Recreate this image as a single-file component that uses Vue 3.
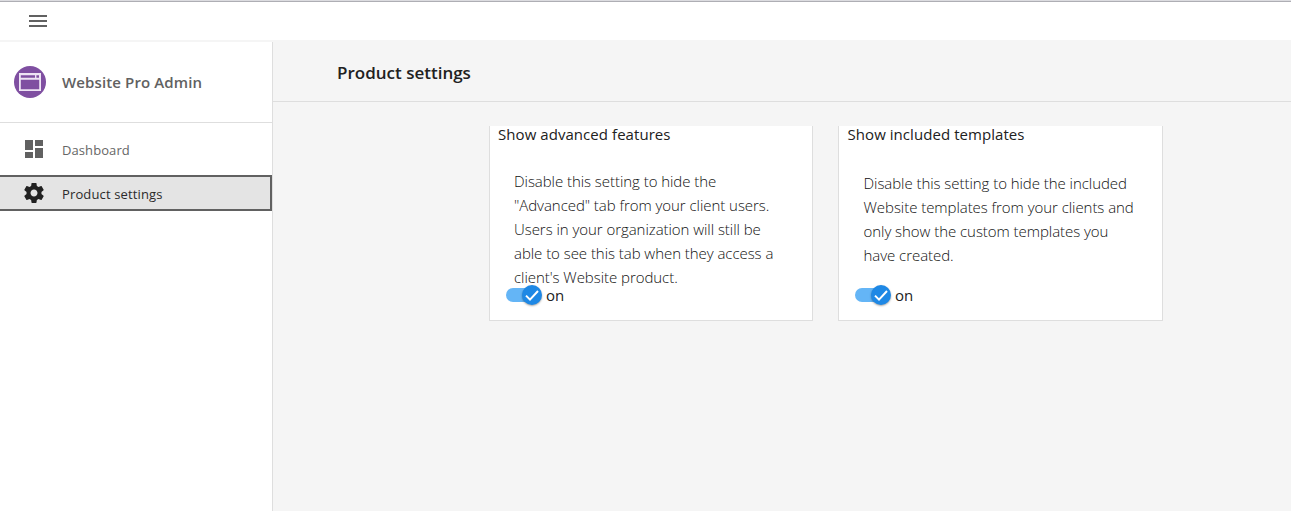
<script setup>
const cards = [
  {
    id: 'advanced',
    title: 'Show advanced features',
    lines: [
      'Disable this setting to hide the',
      '"Advanced" tab from your client users.',
      'Users in your organization will still be',
      'able to see this tab when they access a',
      "client's Website product.",
    ],
  },
  {
    id: 'templates',
    title: 'Show included templates',
    lines: [
      'Disable this setting to hide the included',
      'Website templates from your clients and',
      'only show the custom templates you',
      'have created.',
    ],
  },
]
</script>

<template>
  <div class="app">
    <header class="topbar">
      <svg class="menu" width="24" height="24" viewBox="0 0 24 24">
        <path d="M3 18h18v-2H3v2zm0-5h18v-2H3v2zm0-7v2h18V6H3z" />
      </svg>
    </header>
    <div class="body">
      <nav class="sidebar">
        <div class="brand">
          <svg width="32" height="32" viewBox="0 0 32 32">
            <circle cx="16" cy="16" r="16" fill="#7f4fa1" />
            <path fill="#eee4f4" fill-rule="evenodd" d="M5 7h22v18H5zM6.8 9.2v2.6h14.2V9.2zM22.4 9.2v2.6H25V9.2zM6.8 13.8v9.4h18.4v-9.4z" />
          </svg>
          <span class="brand-name">Website Pro Admin</span>
        </div>
        <a class="item dash">
          <svg width="24" height="24" viewBox="0 0 24 24">
            <path d="M3 13h8V3H3v10zm0 8h8v-6H3v6zm10 0h8V11h-8v10zm0-18v6h8V3h-8z" />
          </svg>
          <span class="item-name">Dashboard</span>
        </a>
        <a class="item active">
          <svg width="24" height="24" viewBox="0 0 24 24">
            <path d="M19.43 12.98c.04-.32.07-.64.07-.98s-.03-.66-.07-.98l2.11-1.65c.19-.15.24-.42.12-.64l-2-3.46c-.12-.22-.39-.3-.61-.22l-2.49 1c-.52-.4-1.08-.73-1.69-.98l-.38-2.65C14.46 2.18 14.25 2 14 2h-4c-.25 0-.46.18-.49.42l-.38 2.65c-.61.25-1.17.59-1.69.98l-2.49-1c-.23-.09-.49 0-.61.22l-2 3.46c-.13.22-.07.49.12.64l2.11 1.65c-.04.32-.07.65-.07.98s.03.66.07.98l-2.11 1.65c-.19.15-.24.42-.12.64l2 3.46c.12.22.39.3.61.22l2.49-1c.52.4 1.08.73 1.69.98l.38 2.65c.03.24.24.42.49.42h4c.25 0 .46-.18.49-.42l.38-2.65c.61-.25 1.17-.59 1.69-.98l2.49 1c.23.09.49 0 .61-.22l2-3.46c.12-.22.07-.49-.12-.64l-2.11-1.65zM12 15.5c-1.93 0-3.5-1.57-3.5-3.5s1.57-3.5 3.5-3.5 3.5 1.57 3.5 3.5-1.57 3.5-3.5 3.5z" />
          </svg>
          <span class="item-name">Product settings</span>
        </a>
      </nav>
      <main class="main">
        <div class="page-head"><h1>Product settings</h1></div>
        <div class="cards">
          <section v-for="card in cards" :key="card.id" class="card" :class="card.id">
            <h2>{{ card.title }}</h2>
            <p>
              <span v-for="line in card.lines" :key="line" class="line">{{ line }}</span>
            </p>
            <div class="toggle">
              <span class="track">
                <span class="thumb">
                  <svg width="16" height="16" viewBox="0 0 16 16">
                    <path d="M2 8.6l4 4L14 4" fill="none" stroke="#fff" stroke-width="2" />
                  </svg>
                </span>
              </span>
              <span class="state">on</span>
            </div>
          </section>
        </div>
      </main>
    </div>
  </div>
</template>

<style>
body {
  margin: 0;
  overflow: hidden;
}
</style>

<style scoped>
.app {
  box-sizing: border-box;
  width: 1291px;
  height: 511px;
  display: flex;
  flex-direction: column;
  background: #f5f5f5;
  font-family: "Open Sans", "Noto Sans", sans-serif;
  color: #212121;
  white-space: nowrap;
  overflow: hidden;
}
.topbar {
  box-sizing: border-box;
  height: 42px;
  flex: none;
  display: flex;
  align-items: center;
  padding-left: 26px;
  background: #fff;
  border-top: 1px solid #dcdce0;
  border-bottom: 2px solid #f5f5f5;
  box-shadow: inset 0 1px #aeaeb4;
}
.menu {
  display: block;
  margin-top: 1px;
  margin-bottom: 1px;
  fill: #616161;
}
.body {
  flex: 1;
  display: flex;
  min-height: 0;
}
.sidebar {
  width: 272px;
  flex: none;
  background: #fff;
  border-right: 1px solid #dedede;
}
.brand {
  height: 80px;
  display: flex;
  align-items: center;
  padding-left: 14px;
  gap: 16px;
  border-bottom: 1px solid #dedede;
}
.brand-name {
  font-size: 15px;
  font-weight: 600;
  letter-spacing: 0.12px;
  color: #616161;
}
.item {
  box-sizing: border-box;
  height: 36px;
  padding-left: 22px;
  display: flex;
  align-items: center;
  gap: 16px;
  color: #666;
}
.item.dash {
  margin: 8px 0;
}
.item svg {
  fill: #616161;
}
.item-name {
  padding-top: 1px;
  font-size: 13px;
  letter-spacing: 0.08px;
}
.item.active {
  border: 2px solid #616161;
  border-left: 0;
  background: #e4e4e4;
  color: #2b2b2b;
}
.item.active svg {
  fill: #212121;
}
.item.active .item-name {
  padding-top: 2px;
  letter-spacing: 0.14px;
}
.main {
  flex: 1;
}
.page-head {
  height: 59px;
  display: flex;
  align-items: center;
  padding-left: 64px;
  border-bottom: 1px solid #dedede;
}
h1 {
  margin: 3px 0 0;
  font-size: 17px;
  line-height: 24px;
  font-weight: 600;
}
.cards {
  display: flex;
  gap: 25px;
  padding: 24px 0 0 216px;
}
.card {
  box-sizing: border-box;
  width: 324px;
  height: 195px;
  display: flex;
  flex-direction: column;
  background: #fff;
  border: 1px solid #dedede;
  border-top: 0;
}
.card.templates {
  width: 325px;
}
h2 {
  margin: -1px 0 0 8px;
  font-size: 15px;
  line-height: 18px;
  font-weight: 400;
  letter-spacing: 0.06px;
}
.templates h2 {
  margin-left: 8.5px;
}
p {
  margin: 26px 0 0 24px;
  height: 117px;
  font-size: 15px;
  line-height: 24px;
  font-weight: 300;
  letter-spacing: -0.05px;
  color: #111;
}
.templates p {
  margin-top: 28px;
  margin-left: 24.5px;
  height: 115px;
}
.line {
  display: block;
}
.toggle {
  display: flex;
  align-items: center;
  height: 18px;
  margin-left: 16px;
  gap: 5px;
}
.track {
  width: 35px;
  height: 14px;
  border-radius: 7px;
  background: #64b5f6;
  display: flex;
  align-items: center;
  justify-content: flex-end;
}
.thumb {
  width: 20px;
  height: 20px;
  flex: none;
  margin-right: -1px;
  border-radius: 50%;
  background: #1e88e5;
  box-shadow: 0 1px 2px rgba(0, 0, 0, 0.35);
  display: flex;
  align-items: center;
  justify-content: center;
}
.state {
  font-size: 15px;
  line-height: 18px;
}
</style>
